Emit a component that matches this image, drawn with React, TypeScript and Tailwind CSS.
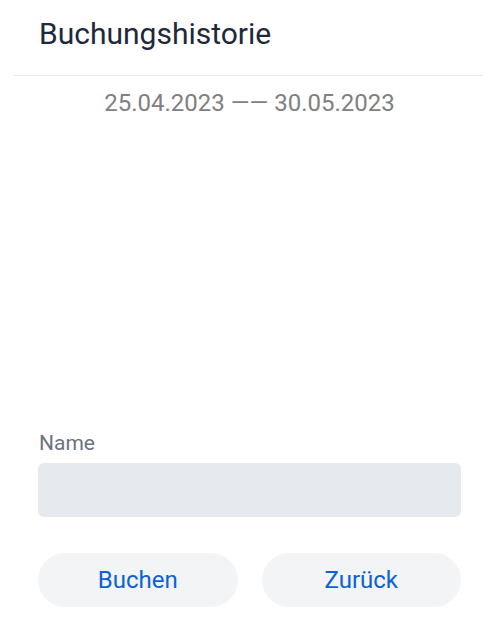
export default function App() {
  return (
    <div className="flex h-[620px] w-full flex-col bg-white font-['Roboto',sans-serif]">
      <div className="pl-[39px] pt-[16px]">
        <h1 className="text-[30px] leading-[36px] font-normal text-[#1e293b]">Buchungshistorie</h1>
      </div>

      <div className="mx-[14px] mt-[23px] h-px bg-[#e8e8e8]" />

      <p className="mt-[11px] pl-[2px] text-center text-[24px] leading-[32px] text-[#808080]">
        25.04.2023 —— 30.05.2023
      </p>

      {/* Formular unten */}
      <div className="mt-auto pl-[38px] pr-[36px] pb-[13px]">
        <label className="block pl-[1px] text-[21px] leading-[30px] text-[#6b7280]">Name</label>
        <input
          type="text"
          className="mt-[5px] block h-[54px] w-full rounded-[6px] bg-[#e6e9ed] px-4 text-[21px] outline-none"
        />

        <div className="mt-[36px] grid grid-cols-2 gap-[24px]">
          <button
            type="button"
            className="h-[54px] rounded-full bg-[#f3f4f6] text-[24px] text-[#0b62d8]"
          >
            Buchen
          </button>
          <button
            type="button"
            className="h-[54px] rounded-full bg-[#f3f4f6] text-[24px] text-[#0b62d8]"
          >
            Zurück
          </button>
        </div>
      </div>
    </div>
  );
}
